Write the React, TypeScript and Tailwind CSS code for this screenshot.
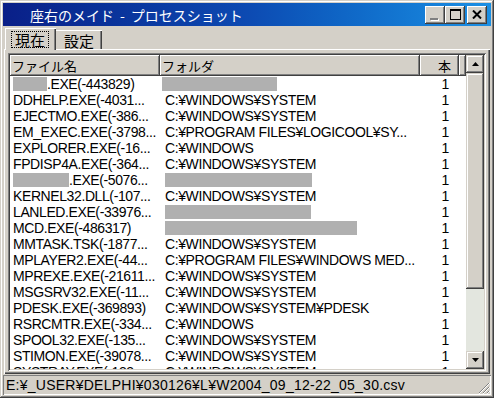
import React from "react";

type Row = {
  name: string;
  nameBlock?: number;
  folder: string;
  folderBlock?: number;
  folderShift?: boolean;
};

const rows: Row[] = [
  { name: ".EXE(-443829)", nameBlock: 34, folder: "", folderBlock: 115, folderShift: true },
  { name: "DDHELP.EXE(-4031...", folder: "C:¥WINDOWS¥SYSTEM" },
  { name: "EJECTMO.EXE(-386...", folder: "C:¥WINDOWS¥SYSTEM" },
  { name: "EM_EXEC.EXE(-3798...", folder: "C:¥PROGRAM FILES¥LOGICOOL¥SY..." },
  { name: "EXPLORER.EXE(-16...", folder: "C:¥WINDOWS" },
  { name: "FPDISP4A.EXE(-364...", folder: "C:¥WINDOWS¥SYSTEM" },
  { name: ".EXE(-5076...", nameBlock: 56, folder: "", folderBlock: 147 },
  { name: "KERNEL32.DLL(-107...", folder: "C:¥WINDOWS¥SYSTEM" },
  { name: "LANLED.EXE(-33976...", folder: "", folderBlock: 146 },
  { name: "MCD.EXE(-486317)", folder: "", folderBlock: 192 },
  { name: "MMTASK.TSK(-1877...", folder: "C:¥WINDOWS¥SYSTEM" },
  { name: "MPLAYER2.EXE(-44...", folder: "C:¥PROGRAM FILES¥WINDOWS MED..." },
  { name: "MPREXE.EXE(-21611...", folder: "C:¥WINDOWS¥SYSTEM" },
  { name: "MSGSRV32.EXE(-11...", folder: "C:¥WINDOWS¥SYSTEM" },
  { name: "PDESK.EXE(-369893)", folder: "C:¥WINDOWS¥SYSTEM¥PDESK" },
  { name: "RSRCMTR.EXE(-334...", folder: "C:¥WINDOWS" },
  { name: "SPOOL32.EXE(-135...", folder: "C:¥WINDOWS¥SYSTEM" },
  { name: "STIMON.EXE(-39078...", folder: "C:¥WINDOWS¥SYSTEM" },
  { name: "SYSTRAY.EXE(-133...", folder: "C:¥WINDOWS¥SYSTEM" },
];

function CaptionButton({ children }: { children: React.ReactNode }) {
  return (
    <div
      className="
        w-[20px] h-[18px]
        bg-[#d4d0c8]
        flex items-center justify-center
        shadow-[inset_-1px_-1px_#404040,inset_1px_1px_#ffffff,inset_-2px_-2px_#808080,inset_2px_2px_#d4d0c8]
      "
    >
      {children}
    </div>
  );
}

function TitleBar() {
  return (
    <div className="h-[23px] flex items-center bg-linear-to-r from-[#0a1f88] via-[#0d4ab2] to-[#1c90e4] pl-[27px] pr-[4px]">
      <div className="flex-1 text-white text-[14px] leading-[16px] font-['Noto_Sans_CJK_JP',sans-serif] whitespace-nowrap">
        座右のメイド<span className="px-[6px]">-</span>プロセスショット
      </div>
      <div className="flex items-center">
        <CaptionButton>
          <div className="mt-[8px] -ml-[2px] w-[8px] h-[2px] bg-[#808080] shadow-[1px_1px_#ffffff]" />
        </CaptionButton>
        <CaptionButton>
          <div className="w-[11px] h-[11px] border border-black border-t-[2px]" />
        </CaptionButton>
        <div className="w-[2px]" />
        <CaptionButton>
          <svg width="10" height="9" viewBox="0 0 10 9">
            <path d="M1 0.5 L9 8.5 M9 0.5 L1 8.5" stroke="#000" strokeWidth="2" />
          </svg>
        </CaptionButton>
      </div>
    </div>
  );
}

function Tabs() {
  return (
    <div className="mt-[2px] h-[21px] flex items-end pl-[2px] text-[15px] font-['Noto_Sans_CJK_JP',sans-serif]">
      <div
        className="
          relative z-10 -mb-[1px]
          w-[51px] h-[22px]
          bg-[#d4d0c8]
          border-l border-t border-white
          shadow-[inset_-1px_0_#404040,inset_-2px_0_#808080]
          flex items-center justify-center
        "
      >
        <div className="border border-dotted border-black px-[3px] leading-[15px] h-[17px] -ml-[2px]">現在</div>
      </div>
      <div
        className="
          w-[46px] h-[19px]
          bg-[#d4d0c8]
          border-t border-white
          shadow-[inset_-1px_0_#404040,inset_-2px_0_#808080]
          flex items-center justify-center leading-[15px]
        "
      >
        設定
      </div>
    </div>
  );
}

function HeaderCell({ children, className }: { children?: React.ReactNode; className: string }) {
  return (
    <div
      className={
        "h-[21px] flex items-center text-[13px] font-['Noto_Sans_CJK_JP',sans-serif] bg-[#d4d0c8] shadow-[inset_-1px_-1px_#404040,inset_1px_1px_#ffffff,inset_-2px_-2px_#808080] " +
        className
      }
    >
      {children}
    </div>
  );
}

function Block({ w }: { w: number }) {
  return <span className="inline-block h-[14px] bg-[#b0b0b0] align-top mt-[1px]" style={{ width: w }} />;
}

function ListRow({ row, last }: { row: Row; last?: boolean }) {
  return (
    <div
      className={
        "flex text-[14px] leading-[16px] tracking-[-0.4px] text-black whitespace-nowrap overflow-hidden " +
        (last ? "h-[5px]" : "h-[16px]")
      }
    >
      <div className="w-[150px] pl-[3px] overflow-hidden flex">
        {row.nameBlock ? <Block w={row.nameBlock} /> : null}
        <span>{row.name}</span>
      </div>
      <div className={"w-[260px] overflow-hidden flex " + (row.folderShift ? "pl-[2px]" : "pl-[5px]")}>
        {row.folderBlock ? <Block w={row.folderBlock} /> : <span>{row.folder}</span>}
      </div>
      <div className="w-[39px] pr-[10px] text-right">1</div>
    </div>
  );
}

function Arrow({ down }: { down?: boolean }) {
  return (
    <svg width="7" height="4" viewBox="0 0 7 4">
      <polygon points={down ? "0,0 7,0 3.5,4" : "3.5,0 7,4 0,4"} fill="#000" />
    </svg>
  );
}

function ScrollBar() {
  const btn =
    "w-[18px] h-[18px] bg-[#d4d0c8] flex items-center justify-center shadow-[inset_-1px_-1px_#404040,inset_1px_1px_#d4d0c8,inset_-2px_-2px_#808080,inset_2px_2px_#ffffff]";
  return (
    <div className="w-[18px] h-full flex flex-col bg-[#e3e6df]">
      <div className={btn}>
        <Arrow />
      </div>
      <div className="w-[18px] h-[216px] bg-[#d4d0c8] shadow-[inset_-1px_-1px_#404040,inset_1px_1px_#d4d0c8,inset_-2px_-2px_#808080,inset_2px_2px_#ffffff]" />
      <div className="flex-1" />
      <div className={btn}>
        <Arrow down />
      </div>
    </div>
  );
}

function ListView() {
  return (
    <div className="h-[318px] p-[2px] bg-white shadow-[inset_1px_1px_#808080,inset_-1px_-1px_#ffffff,inset_2px_2px_#404040,inset_-2px_-2px_#d4d0c8]">
      <div className="h-full flex overflow-hidden">
        <div className="w-[456px] flex flex-col overflow-hidden">
          <div className="flex">
            <HeaderCell className="w-[150px] pl-[2px]">ファイル名</HeaderCell>
            <HeaderCell className="w-[260px] pl-[2px]">フォルダ</HeaderCell>
            <HeaderCell className="w-[39px] justify-end pr-[8px]">本</HeaderCell>
            <HeaderCell className="w-[7px]" />
          </div>
          <div className="flex-1 overflow-hidden bg-white">
            {rows.map((r, i) => (
              <ListRow key={i} row={r} last={i === rows.length - 1} />
            ))}
          </div>
        </div>
        <ScrollBar />
      </div>
    </div>
  );
}

function SizeGrip() {
  return (
    <svg width="12" height="12" viewBox="0 0 12 12" className="shrink-0">
      <path d="M11 1 L1 11 M11 5 L5 11 M11 9 L9 11" stroke="#808080" strokeWidth="1" />
      <path d="M12 1 L1 12 M12 5 L5 12 M12 9 L9 12" stroke="#ffffff" strokeWidth="1" />
    </svg>
  );
}

export default function App() {
  return (
    <div
      className="
        w-[494px] h-[398px]
        bg-[#d4d0c8]
        p-[3px]
        flex flex-col
        overflow-hidden
        font-['Liberation_Sans','Noto_Sans_CJK_JP',sans-serif]
        shadow-[inset_-1px_-1px_#404040,inset_1px_1px_#d4d0c8,inset_-2px_-2px_#808080,inset_2px_2px_#ffffff]
      "
    >
      <TitleBar />
      <Tabs />
      <div
        className="
          mx-[1px]
          h-[325px]
          border-l border-t border-white
          pt-[3px] pl-[3px] pr-[4px] pb-[3px]
          shadow-[inset_-1px_-1px_#404040,inset_-2px_-2px_#808080]
        "
      >
        <ListView />
      </div>
      <div className="h-[21px] flex items-end">
        <div className="flex-1 h-[20px] flex items-center pl-[3px] text-[14px] leading-[16px] tracking-[0.25px] whitespace-nowrap shadow-[inset_1px_1px_#808080,inset_-1px_-1px_#ffffff]">
          E:¥_USER¥DELPHI¥030126¥L¥W2004_09_12-22_05_30.csv
          <div className="flex-1" />
          <div className="self-end mb-[1px] mr-[1px]">
            <SizeGrip />
          </div>
        </div>
      </div>
    </div>
  );
}
